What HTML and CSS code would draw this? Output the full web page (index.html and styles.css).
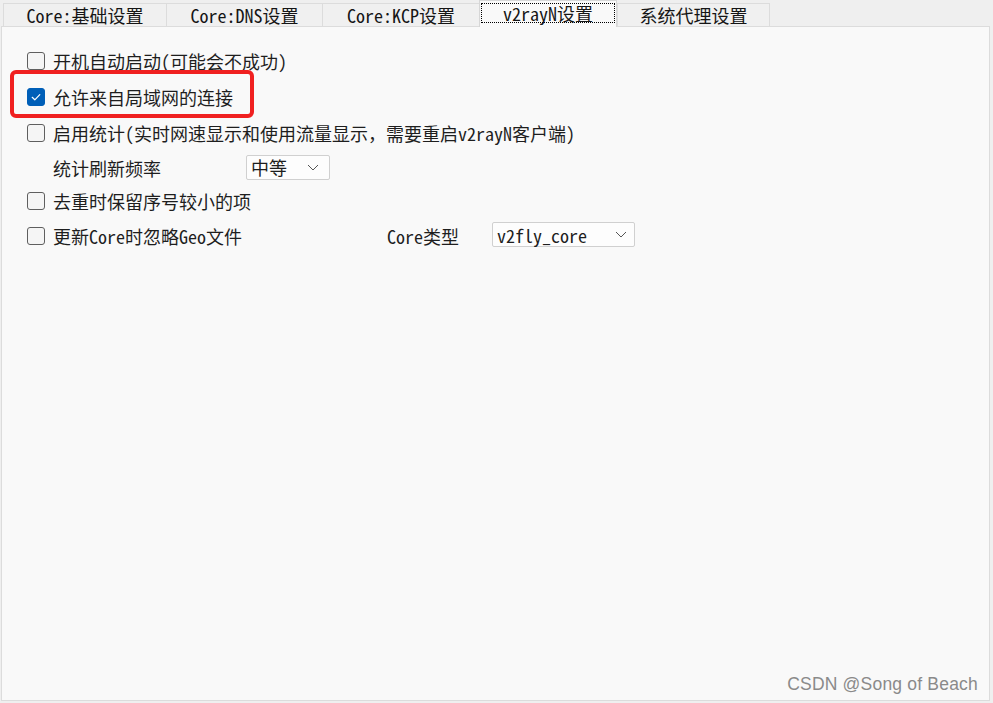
FILE: index.html
```html
<!DOCTYPE html>
<html lang="zh-CN">
<head>
<meta charset="utf-8">
<title>v2rayN设置</title>
<link rel="stylesheet" href="styles.css">
</head>
<body>
<div class="window">
  <div class="tabs">
    <div class="tab t1">Core:基础设置</div>
    <div class="tab t2">Core:DNS设置</div>
    <div class="tab t3">Core:KCP设置</div>
    <div class="tab t4 active"><span class="focus">v2rayN设置</span></div>
    <div class="tab t5">系统代理设置</div>
  </div>
  <div class="panel">
    <div class="rows">
      <label class="row"><span class="cb"></span><span class="txt">开机自动启动(可能会不成功)</span></label>
      <label class="row"><span class="cb checked"><svg viewBox="0 0 18 18" width="18" height="18"><path d="M5.2 9.3 L7.8 11.8 L12.8 6.6" fill="none" stroke="#fff" stroke-width="1.2" stroke-linecap="round" stroke-linejoin="round"/></svg></span><span class="txt">允许来自局域网的连接</span></label>
      <label class="row"><span class="cb"></span><span class="txt">启用统计(实时网速显示和使用流量显示，需要重启v2rayN客户端)</span></label>
      <div class="row short sub">
        <span class="txt lbl">统计刷新频率</span>
        <div class="select s1"><span>中等</span><svg class="chev" viewBox="0 0 12 7" width="12" height="7"><path d="M1 1 L6 6 L11 1" fill="none" stroke="#555" stroke-width="1"/></svg></div>
      </div>
      <label class="row short"><span class="cb"></span><span class="txt">去重时保留序号较小的项</span></label>
      <div class="row tall">
        <label class="pair"><span class="cb"></span><span class="txt lbl2">更新Core时忽略Geo文件</span></label>
        <span class="txt lbl3">Core类型</span>
        <div class="select s2"><span>v2fly_core</span><svg class="chev" viewBox="0 0 12 7" width="12" height="7"><path d="M1 1 L6 6 L11 1" fill="none" stroke="#555" stroke-width="1"/></svg></div>
      </div>
    </div>
    <div class="highlight"></div>
    <div class="watermark">CSDN @Song of Beach</div>
  </div>
</div>
</body>
</html>
```

FILE: styles.css
```css
html, body {
  margin: 0;
  padding: 0;
  background: #efefef;
}
body {
  width: 993px;
  height: 703px;
  overflow: hidden;
  font-family: "Noto Sans Mono CJK SC", "Noto Sans CJK SC", monospace;
  color: #1e1e1e;
}
.window {
  display: flex;
  flex-direction: column;
  padding-left: 1px;
}
.tabs {
  display: flex;
  align-items: flex-end;
  height: 26px;
  padding-left: 2px;
}
.tab {
  height: 23px;
  box-sizing: border-box;
  background: #f0f0f0;
  border: 1px solid #dcdcdc;
  border-bottom: none;
  border-right: none;
  font-size: 18px;
  line-height: 22px;
  text-align: center;
  color: #151515;
  white-space: nowrap;
}
.t1 { width: 163px; }
.t2 { width: 156px; }
.t3 { width: 157px; }
.t4 { width: 138px; }
.t5 { width: 153px; border-right: 1px solid #dcdcdc; }
.tab.active {
  background: #f9f9f9;
  border: 1px solid #d6d6d6;
  border-bottom: none;
  padding: 2px 1px 0;
  position: relative;
  z-index: 1;
  margin-bottom: -1px;
  height: 27px;
}
.focus {
  display: block;
  height: 20px;
  line-height: 19px;
  border: 1px dotted #000;
  box-sizing: border-box;
}
.panel {
  position: relative;
  width: 989px;
  height: 675px;
  box-sizing: border-box;
  background: #f9f9f9;
  border: 1px solid #dcdcdc;
}
.rows {
  display: flex;
  flex-direction: column;
  padding: 16px 0 0 25px;
}
.row {
  display: flex;
  align-items: center;
  height: 36px;
}
.row.short { height: 33px; }
.row.tall { height: 37px; }
.row.sub { padding-left: 26px; }
.pair {
  display: flex;
  align-items: center;
}
.cb {
  width: 18px;
  height: 18px;
  box-sizing: border-box;
  border: 1px solid #5f5f5f;
  border-radius: 3px;
  background: #f5f5f5;
  margin-right: 8px;
  flex: none;
  display: flex;
}
.cb.checked {
  background: #005fb8;
  border-color: #005fb8;
}
.cb.checked svg { margin: -1px; }
.txt {
  font-size: 18px;
  line-height: 24px;
  color: #1e1e1e;
  white-space: nowrap;
}
.lbl { width: 193px; }
.lbl2 { width: 334px; }
.lbl3 { width: 105px; }
.select {
  display: flex;
  align-items: center;
  justify-content: space-between;
  box-sizing: border-box;
  height: 25px;
  padding: 0 10px 0 4px;
  border: 1px solid #d0d0d0;
  border-radius: 2px;
  background: #fdfdfd;
  font-size: 18px;
  color: #1e1e1e;
}
.s1 { width: 84px; margin-top: -1px; }
.s2 { width: 143px; padding-right: 7px; margin-top: -2px; }
.highlight {
  position: absolute;
  left: 8px;
  top: 43px;
  width: 244px;
  height: 48px;
  box-sizing: border-box;
  border: 4px solid #f02020;
  border-radius: 6px;
}
.watermark {
  position: absolute;
  right: 11px;
  bottom: 5px;
  font-family: "Liberation Sans", Arial, sans-serif;
  font-size: 17.5px;
  color: #8a8a8a;
  letter-spacing: 0.2px;
}
```
